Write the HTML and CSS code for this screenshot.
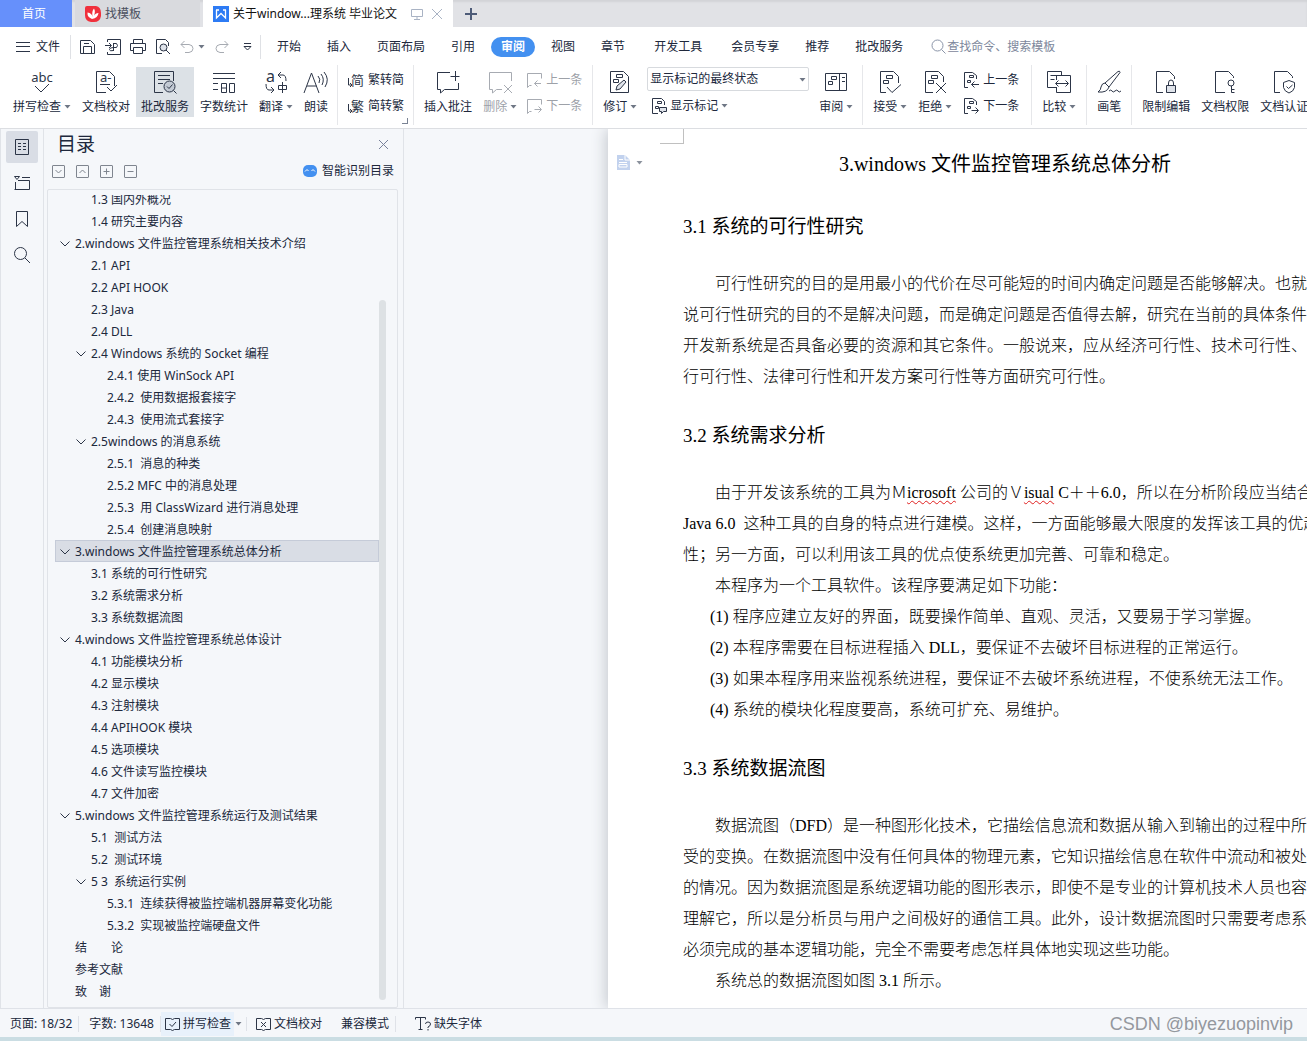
FILE: index.html
```html
<!DOCTYPE html>
<html lang="zh-CN">
<head>
<meta charset="utf-8">
<title>关于windows文件监控管理系统 毕业论文</title>
<link rel="stylesheet" href="styles.css">
</head>
<body>
<svg class="sprite" aria-hidden="true">
  <symbol id="caret" viewBox="0 0 7 4"><path d="M0.5 0h6L3.5 3.5z" fill="#6f7785"/></symbol>
  <symbol id="prev" viewBox="0 0 16 16"><path d="M5.500 13.500H3.500L1.500 15.500V1.500h14v5M15 11.500H8.500M11.500 8.500l-3 3 3 3"/></symbol>
  <symbol id="next" viewBox="0 0 16 16"><path d="M5.500 13.500H3.500L1.500 15.500V1.500h14v5M8.500 11.500H15M12.500 8.500l3 3-3 3"/></symbol>
  <symbol id="rev-prev" viewBox="0 0 16 16"><path d="M5 15.500H1.500v-15h8l4 3V7M6.500 3.500h4v2h-4zM4.500 8.500h3v2h-3zM16 12.500H8.500M11.500 9.500l-3 3 3 3"/></symbol>
  <symbol id="rev-next" viewBox="0 0 16 16"><path d="M5 15.500H1.500v-15h8l4 3V7M6.500 3.500h4v2h-4zM4.500 8.500h3v2h-3zM8.500 12.500H15M12.500 9.500l3 3-3 3"/></symbol>
  <symbol id="chev" viewBox="0 0 10 6"><path d="M0.500 0.500L5 5l4.500-4.500"/></symbol>
</svg>

<header>
  <nav class="tabs">
    <a class="tab home" href="#">首页</a>
    <a class="tab template" href="#"><svg width="16" height="16" viewBox="0 0 16 16"><path d="M2 0h9q5 1 5 7v3q-1 6-7 6H6q-6-1-6-7V2q0-2 2-2z" fill="#f0303c"/><path d="M7 13Q2 11 2.500 6.500Q7 7 7.500 11Q6.500 5 9 2.500Q11 6 8.500 11Q10 7 13.500 7Q13 12 7 13z" fill="#fff"/></svg>找模板</a>
    <a class="tab current" href="#"><svg width="16" height="16" viewBox="0 0 16 16"><path d="M0 0h16v16H0z" fill="#2d7bf4"/><path d="M3.500 4V12L8 7.500l4.500 4.500V4M3 4h3M10 4h3" fill="none" stroke="#fff" stroke-width="1.300"/></svg><span class="tab-name">关于window...理系统 毕业论文</span><svg class="line faint" width="12" height="12" viewBox="0 0 12 12"><path d="M.5 1.500h11v7H.5zM6 8.500v3M3 11.500h6"/></svg><svg class="line faint" width="12" height="12" viewBox="0 0 12 12"><path d="M1 1l10 10M11 1L1 11"/></svg></a>
    <button class="new-tab" aria-label="新建"><svg width="12" height="12" viewBox="0 0 12 12"><path d="M6 0v12M0 6h12" stroke="#4d5b78" stroke-width="2"/></svg></button>
  </nav>

  <div class="menubar">
    <button class="file"><svg class="line" width="14" height="12" viewBox="0 0 14 12"><path d="M0 1.500h14M0 5.500h14M0 10.500h14"/></svg>文件</button>
    <div class="quick">
      <button aria-label="保存"><svg class="line" width="16" height="16" viewBox="0 0 16 16"><path d="M.5 1.500h10l4 4v9H.5zM3.500 14V7.500h8V14M4 4.500h5"/></svg></button>
      <button aria-label="输出为PDF"><svg class="line" width="16" height="16" viewBox="0 0 16 16"><path d="M2.500 3V.5h13v15h-13V13M0 6.500h6M4 4l2.500 2.500L4 9M8.500 4v8M8.500 4.500h3q2 2 0 4h-3M8.500 8.500q-4 0-4 2t4 1"/></svg></button>
      <button aria-label="打印"><svg class="line" width="16" height="16" viewBox="0 0 16 16"><path d="M3.500 4V.5h9V4M3.500 11.500h-3v-7h15v7h-3M3.500 8.500h9v6h-9z"/></svg></button>
      <button aria-label="打印预览"><svg class="line" width="16" height="16" viewBox="0 0 16 16"><path d="M7 14.500H1.500V.5h9l3 3V7"/><circle cx="8.500" cy="8.500" r="3.500" fill="#dfe3ea"/><path d="M11 11l4 4"/></svg></button>
      <button class="off" aria-label="撤销"><svg class="line" width="14" height="14" viewBox="0 0 14 14"><path d="M4.500 1L1 4.500 4.500 8M1 4.500h8q4 .5 4 4t-4 4H5"/></svg><svg width="7" height="4"><use href="#caret"/></svg></button>
      <button class="off" aria-label="恢复"><svg class="line" width="14" height="14" viewBox="0 0 14 14"><path d="M9.500 1L13 4.500 9.500 8M13 4.500H5q-4 .5-4 4t4 4h4"/></svg></button>
      <button aria-label="更多"><svg class="line" width="9" height="8" viewBox="0 0 9 8"><path d="M1 .5h7M1 3.500h7L4.500 7z"/></svg></button>
    </div>
    <nav class="menus">
      <a href="#">开始</a><a href="#">插入</a><a href="#">页面布局</a><a href="#">引用</a><a href="#" class="active">审阅</a><a href="#">视图</a><a href="#">章节</a><a href="#" class="wide">开发工具</a><a href="#" class="wide">会员专享</a><a href="#">推荐</a><a href="#">批改服务</a>
    </nav>
    <label class="search"><svg class="line" width="15" height="15" viewBox="0 0 15 15"><circle cx="6.500" cy="6.500" r="5.500"/><path d="M10.500 10.500l4 4"/></svg><input type="text" placeholder="查找命令、搜索模板"></label>
  </div>

  <div class="ribbon">
    <div class="group">
      <button class="big"><svg class="line" width="24" height="24" viewBox="0 0 24 24"><text x="12" y="12" text-anchor="middle" class="glyph">abc</text><path d="M5 16l6 6 8-8"/></svg><span>拼写检查<svg width="7" height="4"><use href="#caret"/></svg></span></button>
      <button class="big"><svg class="line" width="24" height="24" viewBox="0 0 24 24"><path d="M12 22.500H2.500v-21h13l5 5V16M6 14.500h10M13 17l4 4 6-6"/><text x="6" y="12" class="glyph">a-</text></svg><span>文档校对</span></button>
      <button class="big on"><svg class="line" width="24" height="24" viewBox="0 0 24 24"><path d="M10 22.500H1.500v-21h19V11M5 5.500h12M5 9.500h12M5 13.500h5"/><circle cx="16.500" cy="16.500" r="5.500" fill="#c3cad4"/><path d="M14 16.500l2 2 3.500-4M20.500 20.500l3 3"/></svg><span>批改服务</span></button>
      <button class="big"><svg class="line" width="24" height="24" viewBox="0 0 24 24"><path d="M1 3.500h22M1 8.500h22M1 13.500h5M1 19.500h5M9.500 13.500h5v9h-5zM9.500 18h5M17.500 13.500h5v9h-5z"/></svg><span>字数统计</span></button>
      <button class="big"><svg class="line" width="24" height="24" viewBox="0 0 24 24"><text x="2" y="12" class="glyph tall">a</text><path d="M17 2l-3 3 3 3M14 5h5q3 0 3 6M2 14q0 6 3 6h4M7 17l3 3-3 3M14.500 15.500h8v4h-8zM18.500 12v11"/></svg><span>翻译<svg width="7" height="4"><use href="#caret"/></svg></span></button>
      <button class="big"><svg class="line" width="24" height="24" viewBox="0 0 24 24"><path d="M0 23L7.500 3 15 23M3 16h9.500M14 6q3 3 1 7M17 4q4 5 1 11M20 2q6 7 1 15"/></svg><span>朗读</span></button>
    </div>
    <div class="group launch">
      <div class="stack">
        <button class="small"><svg class="line" width="16" height="16" viewBox="0 0 16 16"><text x="3" y="13" class="glyph">简</text><path d="M.5 6v7H4M2 11l2 2-2 2"/></svg>繁转简</button>
        <button class="small"><svg class="line" width="16" height="16" viewBox="0 0 16 16"><text x="3" y="13" class="glyph">繁</text><path d="M.5 6v7H4M2 11l2 2-2 2"/></svg>简转繁</button>
      </div>
    </div>
    <div class="group">
      <button class="big"><svg class="line" width="24" height="24" viewBox="0 0 24 24"><path d="M14 2.500H1.500v17h3V23l4-3.500h14V13M19.500 1v10M14.500 6.500h9"/></svg><span>插入批注</span></button>
      <button class="big off"><svg class="line" width="24" height="24" viewBox="0 0 24 24"><path d="M23.500 11V2.500h-22v17h3V23l4-3.500H14M16 15l8 8M24 15l-8 8"/></svg><span>删除<svg width="7" height="4"><use href="#caret"/></svg></span></button>
      <div class="stack tight">
        <button class="small off"><svg class="line" width="16" height="16"><use href="#prev"/></svg>上一条</button>
        <button class="small off"><svg class="line" width="16" height="16"><use href="#next"/></svg>下一条</button>
      </div>
    </div>
    <div class="group">
      <button class="big"><svg class="line" width="24" height="24" viewBox="0 0 24 24"><path d="M2.500 1.500h13l5 5v16h-18zM8.500 4.500h6v3h-6zM5.500 9.500h5v3h-5z"/><path d="M8 20l1-4 7-6 2 2-6 7z" fill="#dfe3ea"/></svg><span>修订<svg width="7" height="4"><use href="#caret"/></svg></span></button>
      <div class="stack markup">
        <div class="picker"><select aria-label="标记状态"><option>显示标记的最终状态</option></select><svg width="7" height="4"><use href="#caret"/></svg></div>
        <button class="small"><svg class="line" width="16" height="16" viewBox="0 0 16 16"><path d="M7 15.500H1.500v-15h9l3 3V7M6.500 3.500h4v2h-4zM4.500 8.500h3v2h-3z"/><path d="M8.500 9.500h7v4h-3l-2 2v-2h-2z" fill="#dfe3ea"/></svg>显示标记<svg width="7" height="4"><use href="#caret"/></svg></button>
      </div>
      <button class="big"><svg class="line" width="24" height="24" viewBox="0 0 24 24"><path d="M1.500 3.500h21v17h-21zM15.500 3.500v17M7.500 6.500h5v3h-5zM4.500 11.500h4v3h-4zM18 7.500h3M18 11.500h3"/></svg><span>审阅<svg width="7" height="4"><use href="#caret"/></svg></span></button>
    </div>
    <div class="group">
      <button class="big"><svg class="line" width="24" height="24" viewBox="0 0 24 24"><path d="M8 22.500H2.500v-21h13l5 5V13M8.500 5.500h6v3h-6zM5.500 10.500h5v3h-5zM9 17l5 5.500 9-8"/></svg><span>接受<svg width="7" height="4"><use href="#caret"/></svg></span></button>
      <button class="big"><svg class="line" width="24" height="24" viewBox="0 0 24 24"><path d="M10 22.500H2.500v-21h13l5 5V12M8.500 5.500h6v3h-6zM5.500 10.500h5v3h-5zM13 13l10 10M23 13L13 23"/></svg><span>拒绝<svg width="7" height="4"><use href="#caret"/></svg></span></button>
      <div class="stack revisions">
        <button class="small"><svg class="line" width="16" height="16"><use href="#rev-prev"/></svg>上一条</button>
        <button class="small"><svg class="line" width="16" height="16"><use href="#rev-next"/></svg>下一条</button>
      </div>
    </div>
    <div class="group">
      <button class="big"><svg class="line" width="24" height="24" viewBox="0 0 24 24"><path d="M9 17.500H.5v-16h14v4M3.500 5.500h8M3.500 9.500h4M9.500 10V5.500h14v17h-14V17M9 13.500h12M11.500 10.500l-3 3 3 3M18.500 10.500l3 3-3 3"/></svg><span>比较<svg width="7" height="4"><use href="#caret"/></svg></span></button>
    </div>
    <div class="group">
      <button class="big"><svg class="line" width="24" height="24" viewBox="0 0 24 24"><path d="M8 13L21 1.500q2-1 2 1L12 17zM8 13l4 4q-2 6-11 5 3-2 3-5 1-4 4-4zM12 21q2-2 3 0t3 0 3 0 3 0"/></svg><span>画笔</span></button>
    </div>
    <div class="group">
      <button class="big"><svg class="line" width="24" height="24" viewBox="0 0 24 24"><path d="M9 22.500H2.500v-21h13l5 5V9"/><path d="M12.500 15.500h9v7h-9z" fill="#dfe3ea"/><path d="M14.500 15v-2q0-3 2.500-3t2.500 3v2"/></svg><span>限制编辑</span></button>
      <button class="big"><svg class="line" width="24" height="24" viewBox="0 0 24 24"><path d="M12 22.500H2.500v-21h13l5 5V8"/><circle cx="18" cy="13" r="3"/><path d="M18.500 16v6.500h3M18.500 19.500h3"/></svg><span>文档权限</span></button>
      <button class="big"><svg class="line" width="24" height="24" viewBox="0 0 24 24"><path d="M8 22.500H2.500v-21h13l5 5V8M17 10.500l5.500 2v5q-1 4-5.500 5.500-4.500-1.500-5.500-5.500v-5zM14.500 16.500l2 2 4-3.500"/></svg><span>文档认证</span></button>
    </div>
  </div>
</header>

<main>
  <nav class="rail">
    <button class="on" aria-label="目录"><svg class="line" width="16" height="18" viewBox="0 0 16 18"><path d="M1.500 1.500h13v15h-13zM4 5.500h3M9 5.500h3M4 8.500h3M9 8.500h3M4 11.500h3M9 11.500h3"/></svg></button>
    <button aria-label="章节"><svg class="line" width="16" height="16" viewBox="0 0 16 16"><path d="M.5 1.500h5L3 4.500zM8 2.500h8M.5 14.500h15v-9H4M1.500 7v7"/></svg></button>
    <button aria-label="书签"><svg class="line" width="14" height="18" viewBox="0 0 14 18"><path d="M1.500 1.500h11v15L7 11.500l-5.500 5z"/></svg></button>
    <button aria-label="查找"><svg class="line" width="18" height="18" viewBox="0 0 18 18"><circle cx="7.500" cy="7.500" r="6"/><path d="M12 12l5 5"/></svg></button>
  </nav>

  <aside class="outline">
    <div class="outline-head"><h2>目录</h2><button aria-label="关闭"><svg class="line" width="11" height="11" viewBox="0 0 11 11"><path d="M1 1l9 9M10 1l-9 9"/></svg></button></div>
    <div class="outline-tools">
      <button class="box" aria-label="展开"><svg class="line" width="13" height="13" viewBox="0 0 13 13"><path d="M3.500 5l3 3 3-3"/></svg></button>
      <button class="box" aria-label="折叠"><svg class="line" width="13" height="13" viewBox="0 0 13 13"><path d="M3.500 8l3-3 3 3"/></svg></button>
      <button class="box" aria-label="增加"><svg class="line" width="13" height="13" viewBox="0 0 13 13"><path d="M3.500 6.500h6M6.500 3.500v6"/></svg></button>
      <button class="box" aria-label="减少"><svg class="line" width="13" height="13" viewBox="0 0 13 13"><path d="M3.500 6.500h6"/></svg></button>
      <button class="smart"><svg width="14" height="12" viewBox="0 0 14 12"><rect width="14" height="12" rx="5" fill="#4390f0"/><path d="M2 6.500l2-2 1.500 1.500M8.500 6L10 4.500l2 2" fill="none" stroke="#fff"/></svg>智能识别目录</button>
    </div>
    <div class="tree-box">
      <ul class="tree">
        <li class="l2">1.3 国内外概况</li>
        <li class="l2">1.4 研究主要内容</li>
        <li class="l1"><svg class="line" width="10" height="6"><use href="#chev"/></svg>2.windows 文件监控管理系统相关技术介绍</li>
        <li class="l2">2.1 API</li>
        <li class="l2">2.2 API HOOK</li>
        <li class="l2">2.3 Java</li>
        <li class="l2">2.4 DLL</li>
        <li class="l2"><svg class="line" width="10" height="6"><use href="#chev"/></svg>2.4 Windows 系统的 Socket 编程</li>
        <li class="l3">2.4.1 使用 WinSock API</li>
        <li class="l3">2.4.2&nbsp; 使用数据报套接字</li>
        <li class="l3">2.4.3&nbsp; 使用流式套接字</li>
        <li class="l2"><svg class="line" width="10" height="6"><use href="#chev"/></svg>2.5windows 的消息系统</li>
        <li class="l3">2.5.1&nbsp; 消息的种类</li>
        <li class="l3">2.5.2 MFC 中的消息处理</li>
        <li class="l3">2.5.3&nbsp; 用 ClassWizard 进行消息处理</li>
        <li class="l3">2.5.4&nbsp; 创建消息映射</li>
        <li class="l1 selected"><svg class="line" width="10" height="6"><use href="#chev"/></svg>3.windows 文件监控管理系统总体分析</li>
        <li class="l2">3.1 系统的可行性研究</li>
        <li class="l2">3.2 系统需求分析</li>
        <li class="l2">3.3 系统数据流图</li>
        <li class="l1"><svg class="line" width="10" height="6"><use href="#chev"/></svg>4.windows 文件监控管理系统总体设计</li>
        <li class="l2">4.1 功能模块分析</li>
        <li class="l2">4.2 显示模块</li>
        <li class="l2">4.3 注射模块</li>
        <li class="l2">4.4 APIHOOK 模块</li>
        <li class="l2">4.5 选项模块</li>
        <li class="l2">4.6 文件读写监控模块</li>
        <li class="l2">4.7 文件加密</li>
        <li class="l1"><svg class="line" width="10" height="6"><use href="#chev"/></svg>5.windows 文件监控管理系统运行及测试结果</li>
        <li class="l2">5.1&nbsp; 测试方法</li>
        <li class="l2">5.2&nbsp; 测试环境</li>
        <li class="l2"><svg class="line" width="10" height="6"><use href="#chev"/></svg>5 3&nbsp; 系统运行实例</li>
        <li class="l3">5.3.1&nbsp; 连续获得被监控端机器屏幕变化功能</li>
        <li class="l3">5.3.2&nbsp; 实现被监控端硬盘文件</li>
        <li class="l1">结　　论</li>
        <li class="l1">参考文献</li>
        <li class="l1">致　谢</li>
      </ul>
      <div class="scroll-thumb"></div>
    </div>
  </aside>

  <section class="workspace">
    <article class="page">
      <div class="crop-mark"></div>
      <button class="page-tool" aria-label="段落布局"><svg width="13" height="15" viewBox="0 0 13 15"><path d="M0 0h8l5 5v10H0z" fill="#b4c8ea"/><path d="M8 0v5h5M2 4.500h4M2 7.500h8M2 9.500h8v2.500H2z" fill="none" stroke="#fff"/></svg><svg width="7" height="4"><use href="#caret"/></svg></button>
      <h1>3.windows 文件监控管理系统总体分析</h1>
      <h2>3.1 系统的可行性研究</h2>
      <p>可行性研究的目的是用最小的代价在尽可能短的时间内确定问题是否能够解决。也就是<br>说可行性研究的目的不是解决问题，而是确定问题是否值得去解，研究在当前的具体条件下<br>开发新系统是否具备必要的资源和其它条件。一般说来，应从经济可行性、技术可行性、运<br>行可行性、法律可行性和开发方案可行性等方面研究可行性。</p>
      <h2>3.2 系统需求分析</h2>
      <p>由于开发该系统的工具为Ｍ<span class="typo">icrosoft</span> 公司的Ｖ<span class="typo">isual</span> C＋＋6.0，所以在分析阶段应当结合<br>Java 6.0&nbsp; 这种工具的自身的特点进行建模。这样，一方面能够最大限度的发挥该工具的优越<br>性；另一方面，可以利用该工具的优点使系统更加完善、可靠和稳定。</p>
      <p>本程序为一个工具软件。该程序要满足如下功能：</p>
      <p class="item">(1) 程序应建立友好的界面，既要操作简单、直观、灵活，又要易于学习掌握。</p>
      <p class="item">(2) 本程序需要在目标进程插入 DLL，要保证不去破坏目标进程的正常运行。</p>
      <p class="item">(3) 如果本程序用来监视系统进程，要保证不去破坏系统进程，不使系统无法工作。</p>
      <p class="item">(4) 系统的模块化程度要高，系统可扩充、易维护。</p>
      <h2>3.3 系统数据流图</h2>
      <p>数据流图（DFD）是一种图形化技术，它描绘信息流和数据从输入到输出的过程中所经<br>受的变换。在数据流图中没有任何具体的物理元素，它知识描绘信息在软件中流动和被处理<br>的情况。因为数据流图是系统逻辑功能的图形表示，即使不是专业的计算机技术人员也容易<br>理解它，所以是分析员与用户之间极好的通信工具。此外，设计数据流图时只需要考虑系统<br>必须完成的基本逻辑功能，完全不需要考虑怎样具体地实现这些功能。</p>
      <p>系统总的数据流图如图 3.1 所示。</p>
    </article>
  </section>
</main>

<footer>
  <div class="status">
    <span class="cell">页面: 18/32</span>
    <span class="cell">字数: 13648</span>
    <button class="check"><svg class="line" width="15" height="14" viewBox="0 0 15 14"><path d="M5.500 1.500h-5v11h5l2 1 2-1h5v-11h-5l-2 1zM4.500 7l2.500 2.500L11 5"/></svg>拼写检查</button>
    <button class="cell more" aria-label="拼写选项"><svg width="7" height="4"><use href="#caret"/></svg></button>
    <button class="proof"><svg class="line" width="15" height="14" viewBox="0 0 15 14"><path d="M5.500 1.500h-5v11h5l2 1 2-1h5v-11h-5l-2 1zM5 5l5 5M10 5l-5 5"/></svg>文档校对</button>
    <span class="cell compat">兼容模式</span>
    <button class="fonts"><svg class="line" width="16" height="15" viewBox="0 0 16 15"><path d="M.5 3.500v-2h10v2M5.500 1.500v12M3.500 13.500h4M10.500 8q0-2 2.500-2t2.500 2-2.500 3v1M13 13v1.500"/></svg>缺失字体</button>
    <span class="watermark">CSDN @biyezuopinvip</span>
  </div>
  <div class="desktop-edge"></div>
</footer>
</body>
</html>
```
FILE: styles.css
```css
* { box-sizing: border-box; }
body {
  margin: 0;
  height: 100vh;
  display: flex;
  flex-direction: column;
  overflow: hidden;
  background: #f5f7fa;
  color: #20283c;
  font: 12px/16px "Noto Sans", "Noto Sans CJK SC", sans-serif;
}
button, input, select { font: inherit; color: inherit; }
button { border: 0; padding: 0; background: none; white-space: nowrap; }
a { color: inherit; text-decoration: none; }
svg { display: block; flex: none; overflow: visible; }
.sprite { position: absolute; width: 0; height: 0; }
.line { fill: none; stroke: #2c3547; }
.glyph { font-size: 13px; fill: #2c3547; stroke: none; }
.glyph.tall { font-size: 16px; }
.off { color: #9da1a8; }
.off .line { stroke: #a7abb2; }
.line.faint { stroke: #a9b3c4; }

/* document tabs */
.tabs { display: flex; height: 27px; background: #e1e2e6; box-shadow: inset 0 2px 2px #d2d3d7; }
.tab { display: flex; align-items: center; }
.home { width: 72px; justify-content: center; background: #6690fb; color: #fff; margin-right: 3px; padding-right: 4px; }
.template { width: 125px; background: #d9dade; color: #4a5060; gap: 4px; padding-left: 10px; margin-right: 3px; }
.current { width: 250px; background: #fff; padding-left: 10px; gap: 4px; color: #111; }
.tab-name { width: 174px; white-space: nowrap; }
.current .faint:last-child { margin-left: 4px; }
.new-tab { margin-left: 12px; }

/* menu bar */
.menubar { display: flex; align-items: center; height: 34px; padding: 5px 0 0 16px; background: #fff; white-space: nowrap; }
.file { display: flex; align-items: center; gap: 6px; padding-right: 10px; border-right: 1px solid #dfe1e5; height: 24px; }
.quick { display: flex; align-items: center; gap: 9px; height: 24px; padding: 0 8px 0 9px; border-right: 1px solid #dfe1e5; }
.quick button { display: flex; align-items: center; gap: 4px; }
.quick button:nth-child(6) { margin: 0 5px 0 1px; }
.menus { display: flex; gap: 6px; padding-left: 6px; }
.menus a { padding: 2px 10px; border-radius: 10px; }
.menus .active { background: #4390f0; color: #fff; font-weight: 700; }
.menus .wide { margin-left: 3px; }
.search { display: flex; align-items: center; gap: 1px; margin-left: 18px; }
.search .line { stroke: #8a94a8; }
.search input { border: 0; padding: 0; width: 140px; background: none; outline: 0; }
.search input::placeholder { color: #7d879b; opacity: 1; }

/* ribbon */
.ribbon { display: flex; height: 68px; padding: 4px 0 3px 8px; background: #fff; border-bottom: 1px solid #dcdee2; overflow: hidden; }
.group { display: flex; flex: none; align-items: flex-start; gap: 1px; padding: 2px 4px 0 5px; border-right: 1px solid #e6e7ea; }
.group:first-child { padding-left: 0; }
.group:nth-last-child(-n+3) { padding-right: 5px; }
.group:last-child { border: 0; }
.big { display: flex; flex-direction: column; align-items: center; gap: 5px; padding: 3px 5px 2px; height: 50px; }
.big span { display: flex; align-items: center; }
.big span svg, .small svg:last-child:not(:first-child) { margin-left: 3px; }
.big.on { background: #dce1e6; }
.stack { display: flex; flex-direction: column; gap: 1px; }
.small { display: flex; align-items: center; gap: 4px; height: 25px; padding: 1px 5px 0; }
.tight .small { padding-left: 3px; padding-right: 6px; }
.revisions .small { padding-right: 8px; }
.launch { position: relative; }
.launch .small { padding-left: 5px; }
.launch::after { content: ""; position: absolute; right: 5px; bottom: 1px; width: 5px; height: 5px; border: solid #7a8394; border-width: 0 1px 1px 0; }
.markup { padding: 0 4px; }
.markup .small { gap: 3px; padding-left: 4px; }
.markup .small svg:last-child { margin-left: 0; }
.picker { position: relative; height: 25px; }
.picker select { appearance: none; width: 162px; height: 24px; padding: 0 2px; border: 1px solid #d7dade; border-radius: 2px; background: #fff; }
.picker svg { position: absolute; right: 3px; top: 11px; }

/* work area */
main { flex: 1; min-height: 0; display: flex; }
.rail { width: 44px; flex: none; display: flex; flex-direction: column; gap: 4px; padding: 2px 5px; border: solid #e0e3e8; border-width: 0 1px; }
.rail button { width: 32px; height: 32px; display: flex; align-items: center; justify-content: center; border-radius: 2px; }
.rail .on { background: #d9dde5; }
.outline { width: 360px; flex: none; display: flex; flex-direction: column; padding: 0 5px 0 3px; border-right: 1px solid #e0e3e8; }
.outline-head { display: flex; align-items: center; justify-content: space-between; height: 30px; padding: 0 9px 0 10px; }
.outline-head h2 { margin: 0; font-size: 19px; font-weight: 400; }
.outline-head .line { stroke: #78819a; }
.outline-tools { display: flex; align-items: center; gap: 11px; height: 24px; padding: 0 4px 0 5px; margin-bottom: 6px; }
.box { width: 13px; height: 13px; border: 1px solid #7f858f; border-radius: 1px; }
.box svg { margin: -1px; }
.box .line { stroke: #7f858f; }
.smart { display: flex; align-items: center; gap: 5px; margin-left: auto; }
.tree-box { flex: 1; min-height: 0; display: flex; padding: 5px 11px 5px 7px; border: 1px solid #e0e3e8; border-radius: 2px; }
.tree { flex: 1; margin: 0; padding: 0; list-style: none; overflow: hidden; }
.tree li { display: flex; align-items: center; height: 22px; padding-top: 2px; white-space: pre; border: 1px solid transparent; }
.tree li:first-child { margin-top: -7px; }
.tree li svg { margin: 0 5px 0 -15px; }
.tree .l1 { padding-left: 19px; }
.tree .l2 { padding-left: 35px; }
.tree .l3 { padding-left: 51px; }
.tree .selected { background: #d9dde5; border-color: #c5cbd8; }
.scroll-thumb { width: 7px; margin: 105px 0 2px; border-radius: 4px; background: #dde1e4; }

.workspace { flex: 1; min-width: 0; display: flex; padding-left: 204px; overflow: hidden; }
.page { position: relative; flex: none; width: 794px; padding: 20px 75px 0; background: #fff; box-shadow: -2px 0 14px #c4c8ce; color: #000; font: 16px/31px "Liberation Serif", "Noto Sans CJK SC", serif; white-space: nowrap; }
.page h1 { margin: 0 0 31px; font-size: 20px; line-height: 31px; font-weight: 400; text-align: center; }
.page h2 { margin: 28px 0 26px; font-size: 19px; line-height: 31px; font-weight: 400; }
.page p { margin: 0; text-indent: 32px; font-weight: 300; }
.page .item { text-indent: 27px; }
.typo { text-decoration: underline wavy #e02020 1px; text-underline-offset: 2px; }
.crop-mark { position: absolute; left: 52px; top: 0; width: 24px; height: 15px; border: solid #c0c0c0; border-width: 0 1px 1px 0; }
.page-tool { position: absolute; left: 9px; top: 26px; display: flex; align-items: center; gap: 6px; opacity: 0.8; }

/* status bar */
.status { display: flex; align-items: center; height: 29px; padding: 1px 0 0 5px; border-top: 1px solid #dfe2e8; white-space: nowrap; }
.status button { display: flex; align-items: center; gap: 3px; }
.cell { padding: 0 6px 0 5px; border-right: 1px solid #dfe2e8; }
.cell + .cell { padding-left: 10px; }
.status .check { height: 24px; padding: 0 3px 0 4px; background: #e8f1fb; }
.status .more { height: 14px; padding: 0 4px 0 1px; }
.status .proof { padding: 0 19px 0 9px; }
.cell.compat { padding-left: 0; }
.status .fonts { padding-left: 19px; }
.watermark { margin-left: auto; padding-right: 14px; font: 18px/24px "Liberation Sans", sans-serif; color: #94989e; }
.desktop-edge { height: 4px; background: #cadde3; }
```
